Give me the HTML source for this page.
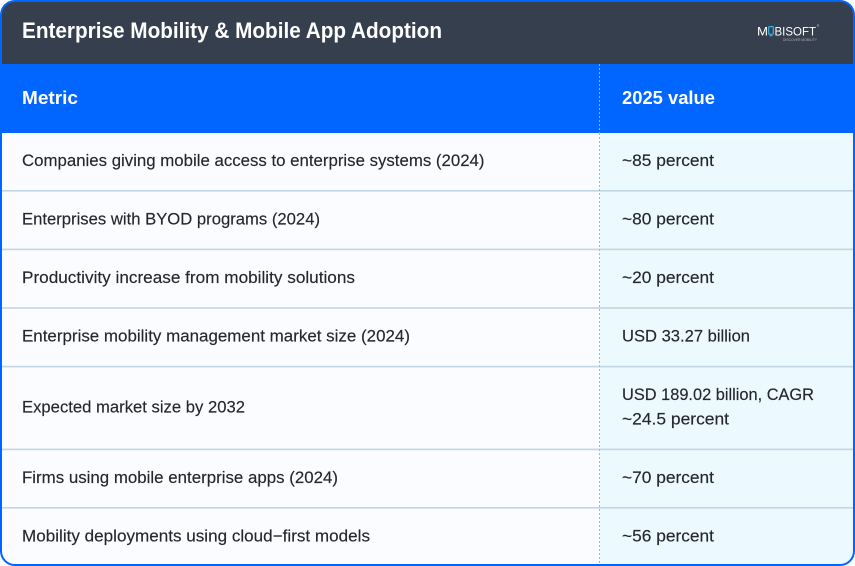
<!DOCTYPE html>
<html lang="en">
<head>
<meta charset="utf-8">
<title>Enterprise Mobility &amp; Mobile App Adoption</title>
<style>
html,body{margin:0;padding:0;background:#fff;width:855px;height:566px;overflow:hidden}
svg{display:block}
text{font-family:"Liberation Sans",sans-serif}
.t{font-size:16.5px;fill:#25272b;stroke:#25272b;stroke-width:.15px}
.h{font-size:18.5px;font-weight:700;fill:#fff}
</style>
</head>
<body>
<svg width="855" height="566" viewBox="0 0 855 566" xmlns="http://www.w3.org/2000/svg">
<defs><clipPath id="c"><rect x="1" y="1" width="853" height="564" rx="14" ry="14"/></clipPath></defs>
<g clip-path="url(#c)">
<rect x="0" y="0" width="855" height="566" fill="#fbfcff"/>
<rect x="600" y="133" width="255" height="433" fill="#ecf9ff"/>
<rect x="0" y="0" width="855" height="64" fill="#363f4d"/>
<rect x="0" y="64" width="855" height="69" fill="#0066ff"/>
<g fill="#c2d5e4">
<rect x="0" y="190" width="855" height="1.6"/>
<rect x="0" y="248.6" width="855" height="1.6"/>
<rect x="0" y="307.2" width="855" height="1.6"/>
<rect x="0" y="365.8" width="855" height="1.6"/>
<rect x="0" y="448.6" width="855" height="1.6"/>
<rect x="0" y="507" width="855" height="1.6"/>
</g>
<line x1="599.5" y1="64" x2="599.5" y2="133" stroke="#7fb2ff" stroke-width="1" stroke-dasharray="2 2"/>
<line x1="599.5" y1="133" x2="599.5" y2="566" stroke="#8fb6f5" stroke-width="1" stroke-dasharray="2 2"/>
</g>
<rect x="1" y="1" width="853" height="564" rx="14" ry="14" fill="none" stroke="#0066ff" stroke-width="2"/>

<text x="22" y="38" font-size="22.5" font-weight="700" fill="#fff" textLength="420" lengthAdjust="spacingAndGlyphs">Enterprise Mobility &amp; Mobile App Adoption</text>

<text x="757" y="35.5" font-size="12" fill="#fff" textLength="11" lengthAdjust="spacingAndGlyphs">M</text>
<rect x="768.7" y="26.6" width="4.6" height="7.6" rx="0.8" fill="none" stroke="#35b4e8" stroke-width="1.2"/>
<rect x="769.5" y="35" width="3" height="1.2" fill="#35b4e8"/>
<text x="774.5" y="35.5" font-size="12" fill="#fff" textLength="41.5" lengthAdjust="spacingAndGlyphs">BISOFT</text>
<text x="783" y="41" font-size="3.5" fill="#aab2bd" textLength="34" lengthAdjust="spacingAndGlyphs">DISCOVER MOBILITY</text>
<circle cx="818" cy="25.5" r="0.9" fill="none" stroke="#cfd4da" stroke-width="0.4"/>

<text class="h" x="22" y="104" textLength="56" lengthAdjust="spacingAndGlyphs">Metric</text>
<text class="h" x="622" y="104" textLength="93" lengthAdjust="spacingAndGlyphs">2025 value</text>

<text class="t" x="22" y="166" textLength="462.5" lengthAdjust="spacingAndGlyphs">Companies giving mobile access to enterprise systems (2024)</text>
<text class="t" x="622" y="166" textLength="92" lengthAdjust="spacingAndGlyphs">~85 percent</text>

<text class="t" x="22" y="224.5" textLength="298" lengthAdjust="spacingAndGlyphs">Enterprises with BYOD programs (2024)</text>
<text class="t" x="622" y="224.5" textLength="92" lengthAdjust="spacingAndGlyphs">~80 percent</text>

<text class="t" x="22" y="283" textLength="333" lengthAdjust="spacingAndGlyphs">Productivity increase from mobility solutions</text>
<text class="t" x="622" y="283" textLength="92" lengthAdjust="spacingAndGlyphs">~20 percent</text>

<text class="t" x="22" y="341.5" textLength="388" lengthAdjust="spacingAndGlyphs">Enterprise mobility management market size (2024)</text>
<text class="t" x="622" y="341.5" textLength="128" lengthAdjust="spacingAndGlyphs">USD 33.27 billion</text>

<text class="t" x="22" y="412.5" textLength="223" lengthAdjust="spacingAndGlyphs">Expected market size by 2032</text>
<text class="t" x="622" y="400" textLength="192" lengthAdjust="spacingAndGlyphs">USD 189.02 billion, CAGR</text>
<text class="t" x="622" y="424.5" textLength="107" lengthAdjust="spacingAndGlyphs">~24.5 percent</text>

<text class="t" x="22" y="483" textLength="316" lengthAdjust="spacingAndGlyphs">Firms using mobile enterprise apps (2024)</text>
<text class="t" x="622" y="483" textLength="92" lengthAdjust="spacingAndGlyphs">~70 percent</text>

<text class="t" x="22" y="541.5" textLength="348" lengthAdjust="spacingAndGlyphs">Mobility deployments using cloud−first models</text>
<text class="t" x="622" y="541.5" textLength="92" lengthAdjust="spacingAndGlyphs">~56 percent</text>
</svg>
</body>
</html>
